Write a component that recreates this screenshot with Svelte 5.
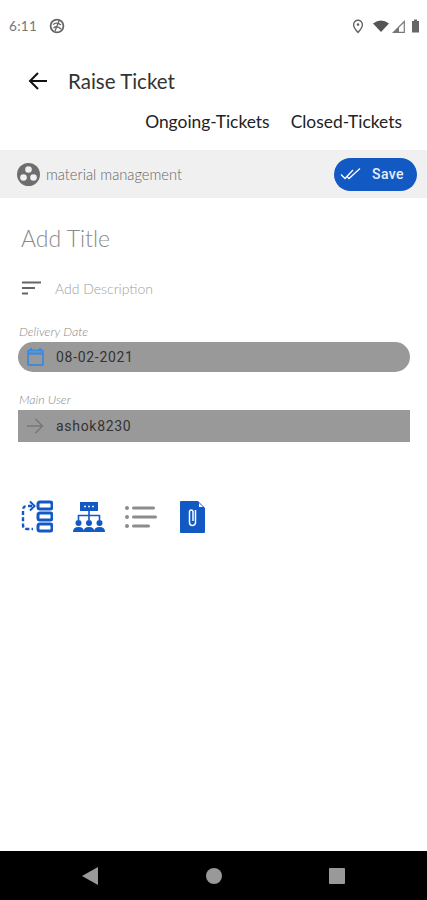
<script>
  let title = "Raise Ticket";
  let tabs = ["Ongoing-Tickets", "Closed-Tickets"];
</script>

<div class="screen">
  <div class="status">
    <span class="time">6:11</span>
    <svg class="sync" width="16" height="16" viewBox="0 0 16 16">
      <circle cx="8" cy="8" r="6.4" fill="none" stroke="#666" stroke-width="1.8" />
      <path d="M4 6.5Q8 3.5 12 7M4.500 10Q8 7 12 11M6 13 10 3" fill="none" stroke="#666" stroke-width="1.3" />
    </svg>
    <div class="status-right">
      <svg class="pin" width="12" height="15" viewBox="0 0 12 15">
        <path d="M6 1.2A4.4 4.4 0 0 0 1.600 5.600C1.600 9 6 13.500 6 13.500S10.400 9 10.400 5.600A4.400 4.400 0 0 0 6 1.200Z" fill="none" stroke="#666" stroke-width="1.4" />
        <circle cx="6" cy="5.600" r="1.300" fill="#666" />
      </svg>
      <svg class="wifi" width="16" height="12" viewBox="0 0 16 12">
        <path d="M0 3.500Q8-2.500 16 3.500L8 12Z" fill="#555" />
      </svg>
      <svg class="signal" width="13" height="13" viewBox="0 0 13 13">
        <path d="M12.300 1.500V12.300H1.500Z" fill="none" stroke="#777" stroke-width="1.2" />
        <path d="M7 7V12.300H1.500Z" fill="#777" />
      </svg>
      <svg class="battery" width="9" height="14" viewBox="0 0 8 14">
        <path d="M2.500 0.500H5.500V2H7.500V13.500H0.500V2H2.500Z" fill="#666" />
      </svg>
    </div>
  </div>

  <div class="appbar">
    <svg width="20" height="20" viewBox="0 0 20 20">
      <path d="M19 10H2M10 2 2 10l8 8" fill="none" stroke="#111" stroke-width="2" />
    </svg>
    <h1>{title}</h1>
  </div>

  <div class="tabs">
    {#each tabs as tab}
      <span>{tab}</span>
    {/each}
  </div>

  <div class="strip">
    <svg width="23" height="23" viewBox="0 0 23 23">
      <circle cx="11.500" cy="11.500" r="11.500" fill="#6e6e6e" />
      <circle cx="11.500" cy="6.500" r="3.300" fill="#f0f0f0" />
      <circle cx="6.500" cy="14.500" r="3.300" fill="#f0f0f0" />
      <circle cx="16.500" cy="14.500" r="3.300" fill="#f0f0f0" />
    </svg>
    <span class="project">material management</span>
    <button class="save">
      <svg width="22" height="14" viewBox="0 0 22 14">
        <path d="M1 7.500 5 11.500 13 3M7.500 10 9 11.500 20 1.500" fill="none" stroke="#fff" stroke-width="1.300" />
      </svg>
      Save
    </button>
  </div>

  <div class="add-title">Add Title</div>

  <div class="desc">
    <svg width="19" height="14" viewBox="0 0 19 14">
      <path d="M0 1.500H19M0 7H13M0 12.500H6" stroke="#666" stroke-width="1.800" />
    </svg>
    <span>Add Description</span>
  </div>

  <div class="field-label first">Delivery Date</div>
  <div class="field pill">
    <svg width="17" height="18" viewBox="0 0 17 18">
      <path d="M4 0v3M13 0v3" stroke="#3d8bdc" stroke-width="2" />
      <rect x="1" y="2.500" width="15" height="14.500" rx="1" fill="none" stroke="#3d8bdc" stroke-width="1.800" />
      <path d="M1 5.500H16" stroke="#3d8bdc" stroke-width="2.400" />
    </svg>
    <span>08-02-2021</span>
  </div>

  <div class="field-label second">Main User</div>
  <div class="field box">
    <svg width="17" height="16" viewBox="0 0 17 16">
      <path d="M0 8H15.500M8.500 1l7 7-7 7" fill="none" stroke="#777" stroke-width="1.500" />
    </svg>
    <span>ashok8230</span>
  </div>

  <div class="tools">
    <svg width="32" height="33" viewBox="0 0 32 33">
      <path d="M11 6H6Q2 6 2 10V25Q2 29 6 29H12" fill="none" stroke="#1259c3" stroke-width="2.400" stroke-dasharray="4 2.200" />
      <path d="M9 1.500l4.500 4.500-4.500 4.500" fill="none" stroke="#1259c3" stroke-width="2" />
      <rect x="17" y="2" width="14" height="7" rx="2" fill="#fff" stroke="#1259c3" stroke-width="3" />
      <rect x="17" y="13" width="14" height="7" rx="2" fill="#fff" stroke="#1259c3" stroke-width="3" />
      <rect x="17" y="24" width="14" height="7" rx="2" fill="#fff" stroke="#1259c3" stroke-width="3" />
    </svg>
    <svg width="32" height="32" viewBox="0 0 32 32">
      <rect x="7" y="1" width="18" height="9" fill="#1259c3" />
      <path d="M11 5.500h2M15 5.500h2M19 5.500h2" stroke="#dfe8f7" stroke-width="1.500" />
      <path d="M5.500 19V14.500H26.500V19M16 10V19" fill="none" stroke="#1259c3" stroke-width="1.600" />
      <g fill="#1259c3">
        <circle cx="5.500" cy="22" r="3" /><path d="M0 31q0-5 5.500-5t5.500 5Z" />
        <circle cx="16" cy="22" r="3" /><path d="M10.500 31q0-5 5.500-5t5.500 5Z" />
        <circle cx="26.500" cy="22" r="3" /><path d="M21 31q0-5 5.500-5t5.500 5Z" />
      </g>
    </svg>
    <svg width="32" height="24" viewBox="0 0 32 24">
      <g fill="#8c8c8c">
        <circle cx="2" cy="3" r="2" /><rect x="7" y="1.500" width="23" height="3" rx="1.500" />
        <circle cx="2" cy="12" r="2" /><rect x="7" y="10.500" width="25" height="3" rx="1.500" />
        <circle cx="2" cy="21" r="2" /><rect x="7" y="19.500" width="18" height="3" rx="1.500" />
      </g>
    </svg>
    <svg class="clip" width="25" height="32" viewBox="0 0 25 32">
      <path d="M1 0H18L25 7V31Q25 32 24 32H1Q0 32 0 31V1Q0 0 1 0Z" fill="#1259c3" />
      <path d="M19 2 23 6H19Z" fill="#fff" />
      <path d="M15.500 9V21.500A3 3 0 0 1 9.500 21.500V10.500A1.800 1.800 0 0 1 13 10.500V20" fill="none" stroke="#fff" stroke-width="1.500" />
    </svg>
  </div>

  <div class="spacer"></div>

  <div class="nav">
    <svg width="16" height="18" viewBox="0 0 16 18"><path d="M16 0V18L0 9Z" fill="#999" /></svg>
    <svg width="16" height="16" viewBox="0 0 16 16"><circle cx="8" cy="8" r="8" fill="#999" /></svg>
    <svg width="16" height="16" viewBox="0 0 16 16"><rect width="16" height="16" rx="1" fill="#999" /></svg>
  </div>
</div>

<style>
  :global(body) {
    margin: 0;
    background: #fff;
  }
  .screen {
    display: flex;
    flex-direction: column;
    width: 427px;
    height: 900px;
    overflow: hidden;
    font-family: Lato, "Noto Sans", sans-serif;
    color: #222;
  }
  .status {
    display: flex;
    align-items: center;
    gap: 12px;
    height: 20px;
    margin-top: 16px;
    padding: 0 7px 0 9px;
  }
  .time {
    font-size: 13.5px;
    color: #777;
    letter-spacing: 0.3px;
  }
  .status-right {
    display: flex;
    align-items: center;
    margin-left: auto;
  }
  .wifi {
    margin-left: 9px;
  }
  .signal {
    margin-left: 3px;
  }
  .battery {
    margin-left: 6px;
  }
  .appbar {
    display: flex;
    align-items: center;
    gap: 20px;
    height: 30px;
    margin-top: 30px;
    padding-left: 28px;
  }
  h1 {
    margin: 0;
    font-size: 20.5px;
    font-weight: 400;
    color: #333;
  }
  .tabs {
    display: flex;
    justify-content: flex-end;
    gap: 21px;
    height: 24px;
    margin-top: 14px;
    padding-right: 25px;
    font-size: 17.4px;
    line-height: 24px;
    color: #222;
  }
  .strip {
    display: flex;
    align-items: center;
    height: 48px;
    margin-top: 16px;
    padding: 0 10px 0 17px;
    background: #f0f0f0;
  }
  .project {
    margin-left: 6px;
    font-size: 14.7px;
    font-weight: 300;
    color: #666;
  }
  .save {
    display: flex;
    align-items: center;
    gap: 10px;
    width: 83px;
    height: 33px;
    margin-left: auto;
    padding: 0 0 0 6px;
    border: 0;
    border-radius: 17px;
    background: #1259c3;
    color: #e8eef8;
    font-family: Roboto, sans-serif;
    font-size: 14px;
    font-weight: 500;
    letter-spacing: 0.4px;
  }
  .add-title {
    height: 30px;
    margin: 25px 0 0 21px;
    font-size: 23px;
    line-height: 30px;
    font-weight: 300;
    color: #8a8a8a;
  }
  .desc {
    display: flex;
    align-items: center;
    gap: 14px;
    height: 20px;
    margin: 25px 0 0 22px;
    font-size: 14px;
    font-weight: 300;
    color: #a0a0a0;
  }
  .field-label {
    height: 14px;
    margin-left: 19px;
    font-size: 12.5px;
    line-height: 14px;
    font-style: italic;
    font-weight: 300;
    color: #888;
  }
  .first {
    margin-top: 27px;
  }
  .second {
    margin-top: 21px;
  }
  .field {
    display: flex;
    align-items: center;
    gap: 12px;
    width: 392px;
    margin: 3px 0 0 18px;
    padding-left: 9px;
    box-sizing: border-box;
    background: #999;
    font-family: Roboto, sans-serif;
    font-size: 14px;
    letter-spacing: 0.7px;
    color: #333;
  }
  .pill {
    height: 30px;
    border-radius: 15px;
  }
  .box {
    height: 32px;
  }
  .tools {
    display: flex;
    align-items: center;
    gap: 20px;
    margin: 58px 0 0 21px;
  }
  .clip {
    margin-left: 3px;
  }
  .spacer {
    flex: 1;
  }
  .nav {
    display: flex;
    justify-content: space-between;
    align-items: center;
    height: 49px;
    padding: 0 82px;
    background: #000;
  }
</style>
